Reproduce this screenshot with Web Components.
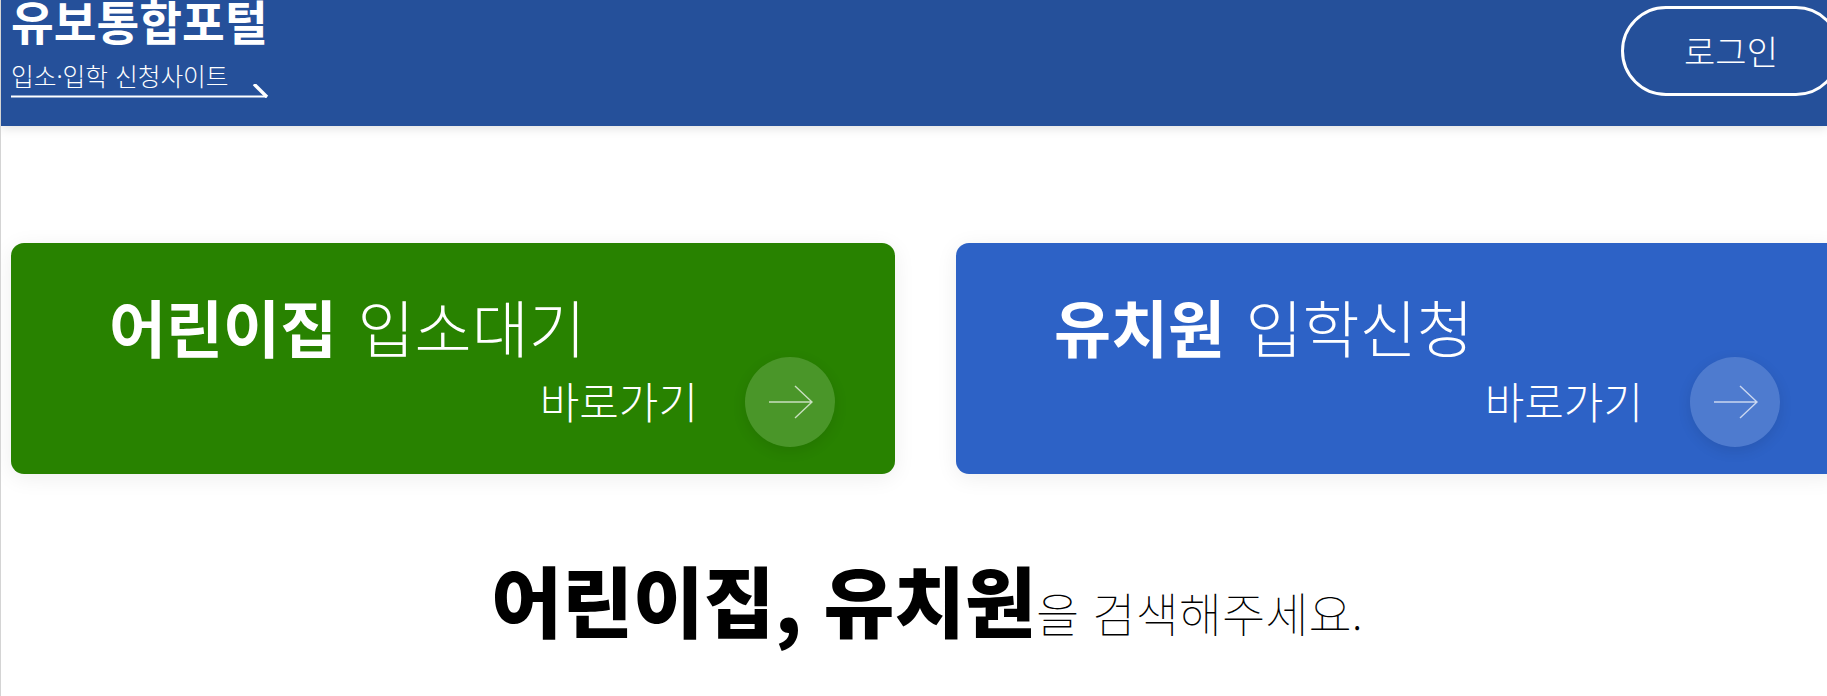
<!DOCTYPE html>
<html lang="ko"><head><meta charset="utf-8">
<style>
html,body{margin:0;padding:0;height:696px;overflow:hidden;background:#fff;font-family:"Noto Sans CJK KR","Noto Sans",sans-serif}
body{border-left:1px solid #d4d4d4;box-sizing:border-box}
</style></head><body>
<portal-page></portal-page>
<template id="t-header"><style>
:host{display:flex;height:126px;background:#25509a;color:#fff;justify-content:space-between;box-shadow:0 2px 10px rgba(0,0,0,.13);position:relative;overflow:visible}
.brand{display:flex;flex-direction:column;margin:-6px 0 0 10px;width:258px}
.t{font-size:46.5px;font-weight:700;line-height:52px;white-space:nowrap}
.s{font-size:24.7px;font-weight:300;line-height:34px;margin-top:12px;white-space:nowrap}
svg{display:block;margin-top:-8px}
.login{box-sizing:border-box;width:220px;height:90px;margin:6px -14px 0 0;border:3px solid #fff;border-radius:45px;display:flex;align-items:center;justify-content:center;font-size:34px;font-weight:300;padding-bottom:2px}
</style><div class="brand"><div class="t">유보통합포털</div><div class="s">입소·입학 신청사이트</div>
<svg width="258" height="14" viewBox="0 0 258 14"><path d="M0 12.5H256" fill="none" stroke="#fff" stroke-width="2"/><path d="M243 0L256 13" fill="none" stroke="#fff" stroke-width="3.4"/></svg></div>
<div class="login">로그인</div></template>
<template id="t-card"><style>
:host{display:flex;flex-direction:column;box-sizing:border-box;width:884px;height:231px;flex:none;border-radius:13px;color:#fff;box-shadow:0 4px 22px rgba(0,0,0,.07);padding:43px 0 0 98px;background:var(--bg)}
.h{font-size:62px;line-height:80px;font-weight:300;white-space:nowrap;word-spacing:3px}
b{font-weight:700}
.go{display:flex;align-items:center;justify-content:flex-end;gap:47px;padding-right:60px;margin-top:-9px}
.l{font-size:43px;font-weight:200;line-height:86px;padding-bottom:4px}
.c{width:90px;height:90px;border-radius:50%;background:rgba(255,255,255,.16);box-shadow:0 4px 14px rgba(0,0,0,.1);display:flex;align-items:center;justify-content:center}
</style><div class="h"><b><slot name="b"></slot></b> <slot name="r"></slot></div>
<div class="go"><span class="l">바로가기</span><div class="c"><svg width="46" height="34" viewBox="0 0 46 34"><path d="M2 17H45M28 1L45 17L28 33" fill="none" stroke="#fff" stroke-opacity=".7" stroke-width="1.4"/></svg></div></div></template>
<template id="t-search"><style>
:host{display:flex;justify-content:center;align-items:baseline;color:#000;margin-top:70px;padding-left:26px}
.b{font-size:77px;font-weight:900;line-height:110px;white-space:nowrap}
.r{font-size:47px;font-weight:100;white-space:nowrap}
</style><span class="b"><slot name="b"></slot></span><span class="r"><slot name="r"></slot></span></template>
<template id="t-page"><style>
:host{display:block}
.cards{display:flex;gap:61px;margin:117px 0 0 10px}
</style><portal-header></portal-header>
<div class="cards"><portal-card style="--bg:#288200"><span slot="b">어린이집</span><span slot="r">입소대기</span></portal-card>
<portal-card style="--bg:#2d62c6"><span slot="b">유치원</span><span slot="r">입학신청</span></portal-card></div>
<portal-search><span slot="b">어린이집, 유치원</span><span slot="r">을 검색해주세요.</span></portal-search></template>
<script>
for(const [n,id] of [['portal-header','t-header'],['portal-card','t-card'],['portal-search','t-search'],['portal-page','t-page']]){
customElements.define(n,class extends HTMLElement{constructor(){super();this.attachShadow({mode:'open'}).appendChild(document.getElementById(id).content.cloneNode(true))}})}
</script></body></html>
